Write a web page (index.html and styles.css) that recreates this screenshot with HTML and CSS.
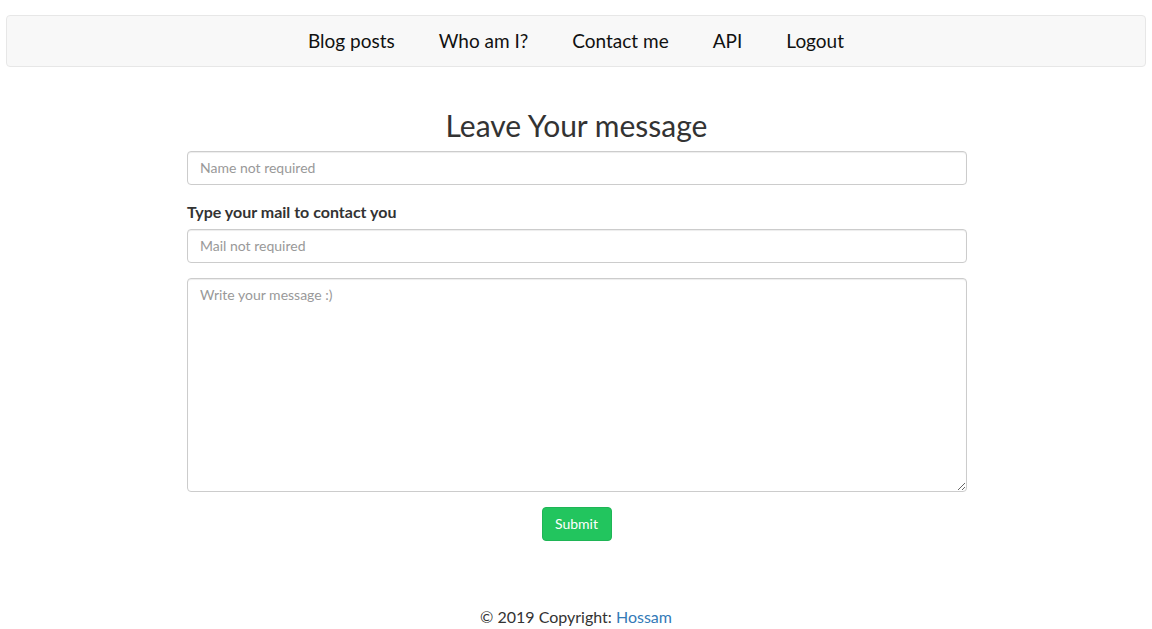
FILE: index.html
```html
<!DOCTYPE html>
<html>
<head>
<meta charset="utf-8">
<link rel="stylesheet" href="styles.css">
</head>
<body>
<nav class="navbar">
  <ul class="nav">
    <li><a href="#">Blog posts</a></li>
    <li><a href="#">Who am I?</a></li>
    <li><a href="#">Contact me</a></li>
    <li><a href="#">API</a></li>
    <li><a href="#">Logout</a></li>
  </ul>
</nav>
<main class="content">
  <h2 class="title">Leave Your message</h2>
  <form class="form">
    <input class="field" type="text" placeholder="Name not required">
    <label class="label">Type your mail to contact you</label>
    <input class="field" type="text" placeholder="Mail not required">
    <textarea class="field area" placeholder="Write your message :)"></textarea>
    <div class="actions"><button class="btn" type="button">Submit</button></div>
  </form>
</main>
<footer class="footer">© 2019 Copyright: <a href="#">Hossam</a></footer>
</body>
</html>
```
FILE: styles.css
```css
* { box-sizing: border-box; }
html, body { margin: 0; padding: 0; }
body {
  font-family: Lato, "Open Sans", sans-serif;
  color: #333;
  background: #fff;
  width: 1152px;
  height: 629px;
  overflow: hidden;
}
.navbar {
  width: 1140px;
  margin: 15px auto 0;
  height: 52px;
  background: #f8f8f8;
  border: 1px solid #e7e7e7;
  border-radius: 4px;
  display: flex;
  justify-content: center;
}
.nav {
  list-style: none;
  margin: 0;
  padding: 0;
  display: flex;
  align-items: center;
  gap: 44px;
}
.nav a {
  color: #111;
  text-decoration: none;
  font-size: 19px;
  line-height: 48px;
  display: block;
}
.content {
  width: 780px;
  margin: 0 auto;
  padding-left: 1px;
}
.title {
  font-weight: 400;
  font-size: 30px;
  text-align: center;
  margin: 38px 0 0;
  line-height: 40px;
  color: #333;
}
.form {
  display: flex;
  flex-direction: column;
  margin-top: 6px;
}
.field {
  width: 780px;
  height: 34px;
  padding: 5px 12px 7px;
  border: 1px solid #ccc;
  border-radius: 4px;
  font-family: Lato, "Open Sans", sans-serif;
  font-size: 14px;
  color: #555;
  background: #fff;
  box-shadow: inset 0 1px 1px rgba(0,0,0,.075);
}
.field::placeholder { color: #999; }
.label {
  font-weight: 700;
  font-size: 16px;
  margin: 18px 0 8px;
  line-height: 18px;
  color: #333;
}
.area {
  height: 214px;
  margin-top: 15px;
  resize: vertical;
  padding-top: 7px;
}
.actions {
  display: flex;
  justify-content: center;
  margin-top: 15px;
}
.btn {
  width: 70px;
  height: 34px;
  background: #22c55e;
  color: #fff;
  border: 1px solid #1fb556;
  border-radius: 4px;
  font-family: Lato, "Open Sans", sans-serif;
  font-size: 14px;
  padding: 0 0 1px;
}
.footer {
  text-align: center;
  font-size: 16px;
  margin-top: 66px;
  line-height: 20px;
  color: #333;
}
.footer a { color: #337ab7; text-decoration: none; }
```
